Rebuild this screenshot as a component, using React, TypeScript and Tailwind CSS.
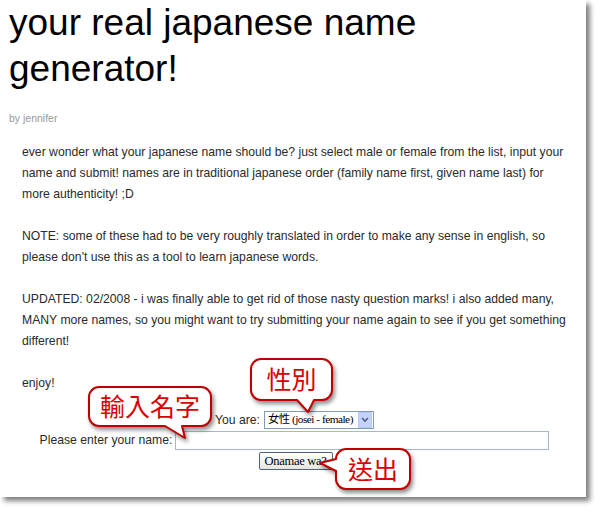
import React from "react";

const sans = "font-['Liberation_Sans','Arial',sans-serif]";

function Bubble1() {
  return (
    <div className="absolute left-[251px] top-[359px] w-[81px] h-[41px]">
      <svg width="81" height="41" className="absolute left-0 top-0 overflow-visible drop-shadow-[2px_3px_2px_rgba(0,0,0,0.45)]">
        <path
          d="M10 0 H71 A10 10 0 0 1 81 10 V31 A10 10 0 0 1 71 41 H63 L57 53 L46 41 H10 A10 10 0 0 1 0 31 V10 A10 10 0 0 1 10 0 Z"
          fill="#ffffff"
          stroke="#c00000"
          strokeWidth="2"
          strokeLinejoin="round"
        />
      </svg>
      <span className="absolute inset-0 flex items-center justify-center pb-[2px] text-[25px] leading-none text-[#d80000] font-['Noto_Sans_CJK_TC',sans-serif]">
        性別
      </span>
    </div>
  );
}

function Bubble2() {
  return (
    <div className="absolute left-[89px] top-[387px] w-[122px] h-[39px]">
      <svg width="122" height="39" className="absolute left-0 top-0 overflow-visible drop-shadow-[2px_3px_2px_rgba(0,0,0,0.45)]">
        <path
          d="M10 0 H112 A10 10 0 0 1 122 10 V29 A10 10 0 0 1 112 39 H93 L96 51 L76 39 H10 A10 10 0 0 1 0 29 V10 A10 10 0 0 1 10 0 Z"
          fill="#ffffff"
          stroke="#c00000"
          strokeWidth="2"
          strokeLinejoin="round"
        />
      </svg>
      <span className="absolute inset-0 flex items-center justify-center pb-[2px] text-[25px] leading-none text-[#d80000] font-['Noto_Sans_CJK_TC',sans-serif]">
        輸入名字
      </span>
    </div>
  );
}

function Bubble3() {
  return (
    <div className="absolute left-[336px] top-[449px] w-[74px] h-[40px]">
      <svg width="74" height="40" className="absolute left-0 top-0 overflow-visible drop-shadow-[2px_3px_2px_rgba(0,0,0,0.45)]">
        <path
          d="M10 0 H64 A10 10 0 0 1 74 10 V30 A10 10 0 0 1 64 40 H10 A10 10 0 0 1 0 30 V22 L-16 14 L0 10 A10 10 0 0 1 10 0 Z"
          fill="#ffffff"
          stroke="#c00000"
          strokeWidth="2"
          strokeLinejoin="round"
        />
      </svg>
      <span className="absolute inset-0 flex items-center justify-center pb-[2px] text-[25px] leading-none text-[#d80000] font-['Noto_Sans_CJK_TC',sans-serif]">
        送出
      </span>
    </div>
  );
}

export default function App() {
  return (
    <div className="w-[600px] h-[513px] bg-white overflow-hidden">
      <div className={`relative w-[586px] h-[497px] bg-white shadow-[4px_4px_5px_rgba(0,0,0,0.5)] ${sans}`}>
        <h1 className="pl-[9px] text-[37px] leading-[46px] text-black font-normal">
          your real japanese name
          <br />
          generator!
        </h1>
        <div className="mt-[19px] pl-[9px] text-[10.5px] leading-[14px] text-[#999999]">by jennifer</div>

        <div className="mt-[17px] ml-[22px] w-[552px] text-[12.2px] leading-[21px] text-[#2a2a2a]">
          <p className="mb-[21px]">
            ever wonder what your japanese name should be? just select male or female from the list, input your name and
            submit! names are in traditional japanese order (family name first, given name last) for more authenticity! ;D
          </p>
          <p className="mb-[21px]">
            NOTE: some of these had to be very roughly translated in order to make any sense in english, so please don't
            use this as a tool to learn japanese words.
          </p>
          <p className="mb-[21px]">
            UPDATED: 02/2008 - i was finally able to get rid of those nasty question marks! i also added many, MANY more
            names, so you might want to try submitting your name again to see if you get something different!
          </p>
          <p>enjoy!</p>
        </div>

        <div className="mt-[16px] ml-[22px] w-[545px] text-[12.2px] text-[#2a2a2a]">
          <div className="h-[20px] flex items-center justify-center gap-[4px]">
            <span>You are:</span>
            <div className="w-[110px] h-[18px] border border-[#7f9db9] bg-white flex items-center">
              <span className="flex-1 min-w-0 pl-[3px] text-[11.3px] tracking-[-0.5px] leading-none text-black font-['Liberation_Serif','Noto_Sans_CJK_TC',serif] whitespace-nowrap">
                女性 (josei - female)
              </span>
              <span className="shrink-0 w-[14px] h-[16px] mr-[1px] bg-[#c3d3fd] border border-[#b6c7f0] flex items-center justify-center">
                <svg width="8" height="6" viewBox="0 0 8 6">
                  <path d="M1 1 L4 4 L7 1" fill="none" stroke="#4d6185" strokeWidth="1.6" />
                </svg>
              </span>
            </div>
          </div>
          <div className="h-[21px] flex items-center justify-center gap-[3px]">
            <span>Please enter your name:</span>
            <div className="w-[374px] h-[19px] border border-[#a5b6cf] bg-white" />
          </div>
          <div className="h-[20px] flex items-center justify-center">
            <div className="ml-[2px] w-[74px] h-[18px] rounded-[2px] border border-[#4f6378] bg-gradient-to-b from-[#ffffff] to-[#e6e6e0] flex items-center justify-center text-[12.5px] tracking-[-0.3px] leading-none text-black font-['Liberation_Serif',serif] whitespace-nowrap">
              Onamae wa?
            </div>
          </div>
        </div>

        <Bubble1 />
        <Bubble2 />
        <Bubble3 />
      </div>
    </div>
  );
}
